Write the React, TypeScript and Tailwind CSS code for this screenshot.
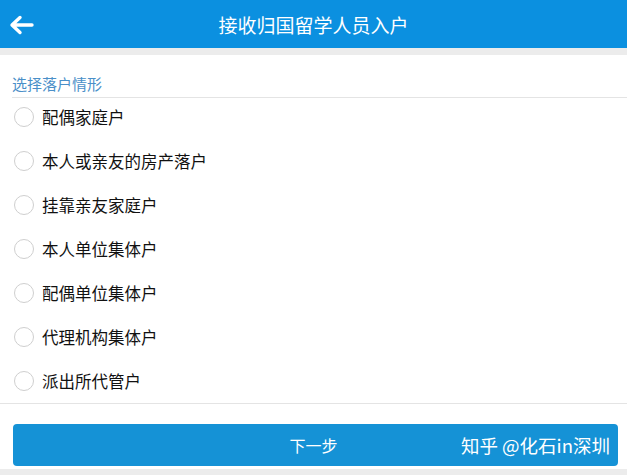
const options = [
  '配偶家庭户',
  '本人或亲友的房产落户',
  '挂靠亲友家庭户',
  '本人单位集体户',
  '配偶单位集体户',
  '代理机构集体户',
  '派出所代管户',
]

const cjk = { fontFamily: '"Noto Sans CJK SC", "Noto Sans", sans-serif' }

export default function App() {
  return (
    <div className="w-[627px] h-[475px] bg-[#ececec] flex flex-col overflow-hidden" style={cjk}>
      {/* Header */}
      <header className="h-[48px] bg-[#0b90e0] flex items-center relative shrink-0">
        <svg className="absolute left-[9px] top-[15px]" width="26" height="20" viewBox="0 0 26 20" fill="none">
          <path d="M23 10H4M11 2.5L3 10l8 7.5" stroke="white" strokeWidth="3.4" strokeLinecap="round" strokeLinejoin="round" />
        </svg>
        <h1 className="w-full text-center text-white text-[19px] leading-none">接收归国留学人员入户</h1>
      </header>

      {/* Options */}
      <div className="mt-[7px] bg-white flex flex-col">
        <div className="ml-[12px] pt-[19px] pb-[3px] border-b border-[#e4e4e4]">
          <p className="text-[15px] leading-[20px] text-[#4a8fc8]">选择落户情形</p>
        </div>
        <div className="flex flex-col border-b border-[#e4e4e4] -mt-[3px]">
          {options.map((label) => (
            <label key={label} className="h-[44px] flex items-center pl-[14px] gap-[8px]">
              <span className="w-[20px] h-[20px] rounded-full border-[1.5px] border-[#cfcfcf] bg-white shrink-0" />
              <span className="text-[16.5px] leading-none text-[#111]">{label}</span>
            </label>
          ))}
        </div>
        <div className="h-[20px] bg-white" />
      </div>

      {/* Footer button */}
      <div className="bg-white pl-[13px] pr-[9px] pb-[3px]">
        <button className="w-full h-[42px] rounded-[4px] bg-[#1592d6] relative flex items-center justify-center">
          <span className="text-white text-[16px] -translate-x-[2px]">下一步</span>
          <span className="absolute right-[8px] text-white text-[18.5px] leading-none">知乎 @化石in深圳</span>
        </button>
      </div>
    </div>
  )
}
